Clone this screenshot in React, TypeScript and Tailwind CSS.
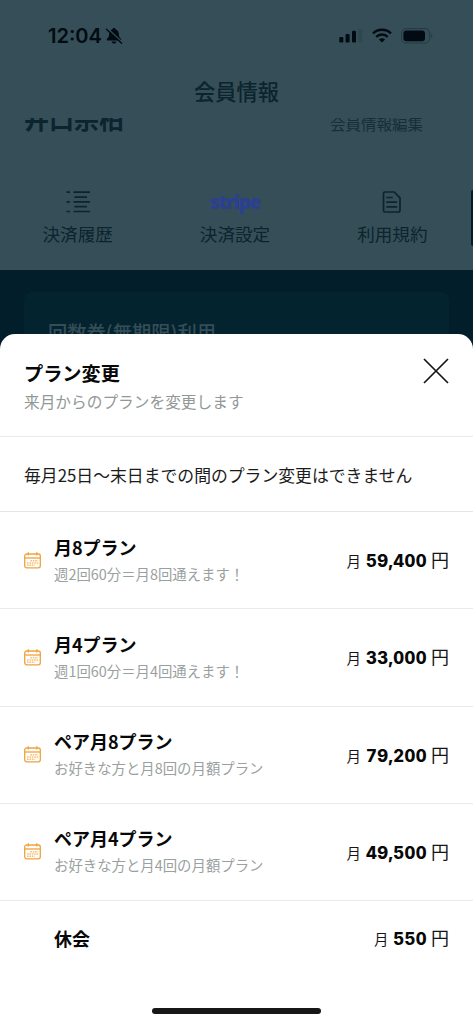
import * as React from 'react';

interface Plan {
  name: string;
  note?: string;
  price: string;
}

const plans: Plan[] = [
  { name: '月8プラン', note: '週2回60分＝月8回通えます！', price: '59,400' },
  { name: '月4プラン', note: '週1回60分＝月4回通えます！', price: '33,000' },
  { name: 'ペア月8プラン', note: 'お好きな方と月8回の月額プラン', price: '79,200' },
  { name: 'ペア月4プラン', note: 'お好きな方と月4回の月額プラン', price: '49,500' },
  { name: '休会', price: '550' },
];

const BellOffIcon = () => (
  <svg width="18" height="18" viewBox="0 0 18 18" fill="none">
    <path
      d="M9 1C8.1 1 7.6 1.6 7.5 2.3C5.3 3 4.2 4.8 4.2 7C4.2 10.2 2.7 11 1.8 12.3C1.5 12.9 1.9 13.5 2.6 13.5H15.4C16.1 13.5 16.5 12.9 16.2 12.3C15.3 11 13.8 10.2 13.8 7C13.8 4.8 12.7 3 10.5 2.3C10.4 1.6 9.9 1 9 1Z"
      fill="#020b13"
    />
    <path d="M6.6 14.5H11.4C11.2 15.8 10.2 16.6 9 16.6C7.8 16.6 6.8 15.8 6.6 14.5Z" fill="#020b13" />
    <path d="M2.8 1.8L17 15" stroke="#364e57" strokeWidth="1.4" />
    <path d="M1.4 2.2L16.6 16.2" stroke="#020b13" strokeWidth="1.3" strokeLinecap="round" />
  </svg>
);

const SignalIcon = () => (
  <svg width="24" height="14" viewBox="0 0 24 14" fill="#020b13">
    <rect x="0.3" y="8" width="4" height="5.4" rx="1.2" />
    <rect x="6.6" y="5" width="4" height="8.4" rx="1.2" />
    <rect x="13" y="1.8" width="4" height="11.6" rx="1.2" />
    <rect x="19.2" y="0" width="4" height="13.4" rx="1.2" fill="#2f4750" />
  </svg>
);

const WifiIcon = () => (
  <svg width="20" height="15" viewBox="0 0 20 15" fill="none" stroke="#020b13" strokeWidth="2.4">
    <path d="M1 5.3C6 0.6 14 0.6 19 5.3" />
    <path d="M4.2 8.8C7.5 5.8 12.5 5.8 15.8 8.8" />
    <path d="M10 14.6L6.9 11.4C8.7 9.8 11.3 9.8 13.1 11.4Z" fill="#020b13" stroke="none" />
  </svg>
);

const BatteryIcon = () => (
  <svg width="33" height="16" viewBox="0 0 33 16" fill="none">
    <rect x="0.6" y="0.6" width="28" height="14.4" rx="4.4" stroke="#233a43" strokeWidth="1" />
    <rect x="2.4" y="2.4" width="21.6" height="10.8" rx="3" fill="#020b13" />
    <path d="M30.2 5.4C31.6 6 31.6 9.4 30.2 10Z" fill="#233a43" />
  </svg>
);

const ListIcon = () => (
  <svg width="26" height="24" viewBox="0 0 26 24" stroke="#0b242e" strokeWidth="1.7" fill="none">
    <path d="M1.5 2.2H5M8.5 2.2H25M9.5 7.2H22M1.5 11.9H5M8.5 11.9H25M9.5 16.7H22M1.5 21.5H5M8.5 21.5H25" />
  </svg>
);

const DocumentIcon = () => (
  <svg width="20" height="24" viewBox="0 0 20 24" stroke="#0b242e" strokeWidth="1.7" fill="none" strokeLinejoin="round">
    <path d="M3 2H12.2L18 7.8V20Q18 22 16 22H3Q1.5 22 1.5 20.5V3.5Q1.5 2 3 2Z" />
    <path d="M5 7.5H10M5 12.2H14.5M5 16.8H14.5" strokeLinecap="round" />
  </svg>
);

const CalendarIcon = () => (
  <svg width="18" height="17" viewBox="0 0 18 17" fill="none" stroke="#f0a23c">
    <rect x="0.7" y="2" width="15.6" height="13.8" rx="2" strokeWidth="1.3" />
    <path d="M1 6H16.2" strokeWidth="1.3" />
    <path d="M4.3 0.3V3.6M12.8 0.3V3.6" strokeWidth="1.3" />
    <path d="M6.4 8.7H14.2M3 11H14.2M3 13.3H10.8" strokeWidth="1.4" strokeDasharray="1.6 0.8" stroke="#f6c07a" />
  </svg>
);

const NavItem = ({ label, children }: { label: string; children: React.ReactNode }) => (
  <div className="flex flex-1 flex-col items-center">
    <div className="flex h-6 items-center">{children}</div>
    <span className="mt-[7px] text-[17.6px] leading-[26px]">{label}</span>
  </div>
);

const PlanRow = ({ plan }: { plan: Plan }) => (
  <div className={`flex items-center px-6 ${plan.note ? 'h-[97.25px] border-b border-[#e9eaea] pb-0.5' : 'h-[77px] pb-1'}`}>
    <div className="w-[30px] shrink-0 pt-0.5">{plan.note && <CalendarIcon />}</div>
    <div className="flex-1">
      <p className="text-[18px] leading-[26px] font-bold text-[#080808]">{plan.name}</p>
      {plan.note && <p className="mt-[3px] text-[14.4px] leading-[22px] whitespace-nowrap text-[#9a9fa0]">{plan.note}</p>}
    </div>
    <div className="flex items-baseline pt-0.5 whitespace-nowrap text-[#161616]">
      <span className="text-[14.4px]">月</span>
      <span className="mr-1 ml-[5px] font-[Inter] text-[16.8px] font-extrabold tracking-[0.4px] text-[#080808] tabular-nums">{plan.price}</span>
      <span className="text-[18px]">円</span>
    </div>
  </div>
);

const MemberPage = () => (
  <div className="flex h-full flex-col bg-[#364e57] text-[#0b242e]">
    <div className="flex h-[71px] shrink-0 items-center justify-between pr-[39px] pl-12">
      <div className="flex items-center">
        <span className="font-[Inter] text-[20px] font-semibold text-[#020b13]">12:04</span>
        <span className="ml-[3px]"><BellOffIcon /></span>
      </div>
      <div className="flex items-center">
        <SignalIcon />
        <span className="ml-[9px]"><WifiIcon /></span>
        <span className="ml-[9px]"><BatteryIcon /></span>
      </div>
    </div>
    <h1 className="h-[47px] shrink-0 text-center text-[21.2px] leading-[39px] font-medium">会員情報</h1>
    <div className="flex h-[60px] shrink-0 items-start justify-between overflow-hidden pr-[50px] pl-6">
      <p className="-mt-[18px] text-[25px] leading-[36px] font-bold">井口宗柏</p>
      <p className="-mt-[7px] text-[15.5px] leading-[24px] text-[#142f39]">会員情報編集</p>
    </div>
    <div className="-ml-px flex h-[92px] shrink-0 pt-3">
      <NavItem label="決済履歴"><ListIcon /></NavItem>
      <NavItem label="決済設定">
        <span className="font-['Open_Sans'] text-[19px] font-extrabold tracking-[-1.3px] text-[#2b4090]">stripe</span>
      </NavItem>
      <NavItem label="利用規約"><DocumentIcon /></NavItem>
      <div className="h-14 w-0.5 rounded-l-sm bg-[#031c27]" />
    </div>
    <div className="flex-1 bg-[#011e2a] px-6 pt-[22px]">
      <div className="h-60 rounded-lg bg-[#03232f] px-6 pt-[26px] text-[19.3px] leading-7 font-medium text-[#344e58]">
        回数券(無期限)利用
      </div>
    </div>
  </div>
);

const PlanSheet = () => (
  <div className="absolute inset-x-0 bottom-0 flex h-[690px] flex-col rounded-t-[15px] bg-white">
    <div className="flex h-[103px] shrink-0 justify-between border-b border-[#e9eaea] pt-[25px] pr-[23px] pl-6">
      <div>
        <h2 className="text-[19.2px] leading-[28px] font-bold text-[#080808]">プラン変更</h2>
        <p className="mt-[3px] text-[15.7px] leading-[23px] text-[#929898]">来月からのプランを変更します</p>
      </div>
      <svg width="28" height="28" viewBox="0 0 28 28" stroke="#161616" strokeWidth="1.7" className="-mt-[2px]">
        <path d="M2 2L26 26M26 2L2 26" />
      </svg>
    </div>
    <p className="flex h-[75px] shrink-0 items-center border-b border-[#e4e5e5] px-6 pt-px text-[16.83px] whitespace-nowrap text-[#1c1c1c]">
      毎月25日〜末日までの間のプラン変更はできません
    </p>
    {plans.map((plan) => (
      <PlanRow key={plan.name} plan={plan} />
    ))}
    <div className="mx-auto mt-[30px] h-1.5 w-[169px] rounded-full bg-[#171717]" />
  </div>
);

export default function App() {
  return (
    <div lang="ja" className="relative h-[1024px] w-[473px] overflow-hidden font-['Noto_Sans_CJK_JP',sans-serif]">
      <MemberPage />
      <PlanSheet />
    </div>
  );
}
